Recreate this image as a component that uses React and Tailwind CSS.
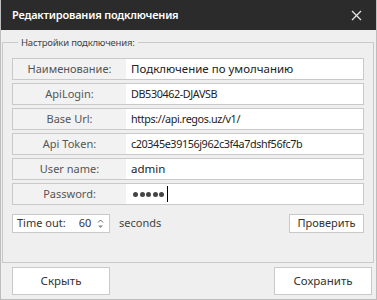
import React from 'react';

const rows = [
  { label: 'Наименование:', value: 'Подключение по умолчанию' },
  { label: 'ApiLogin:', value: 'DB530462-DJAVSB', compact: true },
  { label: 'Base Url:', value: 'https://api.regos.uz/v1/', compact: true },
  { label: 'Api Token:', value: 'c20345e39156j962c3f4a7dshf56fc7b', compact: true },
  { label: 'User name:', value: 'admin' },
  { label: 'Password:', value: null },
];

const FieldRow = ({ label, value, compact }) => (
  <div className="flex h-[22px] border border-[#c9c9c9] bg-white">
    <div className="flex w-[113px] items-center justify-center bg-[#f2f2f2] text-[11px] text-[#555]">
      {label}
    </div>
    <div
      className={
        compact
          ? 'flex flex-1 items-center pl-[5px] text-[10.8px] tracking-[-0.4px] text-[#222]'
          : 'flex flex-1 items-center pl-[5px] text-[11.5px] text-[#222]'
      }
    >
      {value !== null ? (
        value
      ) : (
        <span className="ml-[2px] flex items-center gap-[1.6px]">
          {[0, 1, 2, 3, 4].map((i) => (
            <span key={i} className="h-[5px] w-[5px] rounded-full bg-[#444]" />
          ))}
          <span className="ml-[1px] h-[16px] w-px bg-black" />
        </span>
      )}
    </div>
  </div>
);

const Spinner = () => (
  <svg width="7" height="12" viewBox="0 0 7 12" className="ml-auto mr-[5px]">
    <path d="M1 4.5 L3.5 2 L6 4.5" fill="none" stroke="#666" strokeWidth="1" />
    <path d="M1 7.5 L6 7.5 L3.5 10 Z" fill="#888" />
  </svg>
);

export default function App() {
  return (
    <div
      className="flex h-[300px] w-[377px] flex-col border-x border-b border-[#bdbdbd] bg-[#efefef]"
      style={{ fontFamily: '"Noto Sans", "Open Sans", sans-serif' }}
    >
      <div className="flex h-[30px] shrink-0 items-center justify-between bg-[#2b2b2b] pl-[11px] pr-[14px]">
        <span className="text-[11px] font-semibold tracking-[-0.2px] text-white">Редактирования подключения</span>
        <svg width="11" height="11" viewBox="0 0 11 11">
          <path d="M1 1 L10 10 M10 1 L1 10" stroke="#e6e6e6" strokeWidth="1.3" />
        </svg>
      </div>

      <fieldset className="mt-[5px] ml-px h-[228px] w-[372px] border border-[#c9c9c9] px-[9px] pb-0 pt-[8px]">
        <legend className="ml-[6px] px-[3px] text-[9.5px] leading-[15px] tracking-[-0.2px] text-[#444]">
          Настройки подключения:
        </legend>
        <div className="flex flex-col gap-[3px]">
          {rows.map((r) => (
            <FieldRow key={r.label} label={r.label} value={r.value} compact={r.compact} />
          ))}
        </div>
        <div className="mt-[9px] flex items-center">
          <div className="flex h-[19px] w-[98px] items-center border border-[#c9c9c9] bg-white pl-[4px] text-[11px] text-[#333]">
            <span>Time out:</span>
            <span className="ml-[13px]">60</span>
            <Spinner />
          </div>
          <span className="ml-[9px] text-[11px] text-[#444]">seconds</span>
          <button className="ml-auto h-[19px] w-[75px] border border-[#c9c9c9] bg-white text-[11px] text-[#333]">
            Проверить
          </button>
        </div>
      </fieldset>

      <div className="flex items-center justify-between pl-[11px] pr-[4px] pt-[4px]">
        <button className="h-[28px] w-[98px] border border-[#c9c9c9] bg-white text-[11.5px] text-[#333]">Скрыть</button>
        <button className="h-[28px] w-[98px] border border-[#c9c9c9] bg-white text-[11.5px] text-[#333]">Сохранить</button>
      </div>
    </div>
  );
}
